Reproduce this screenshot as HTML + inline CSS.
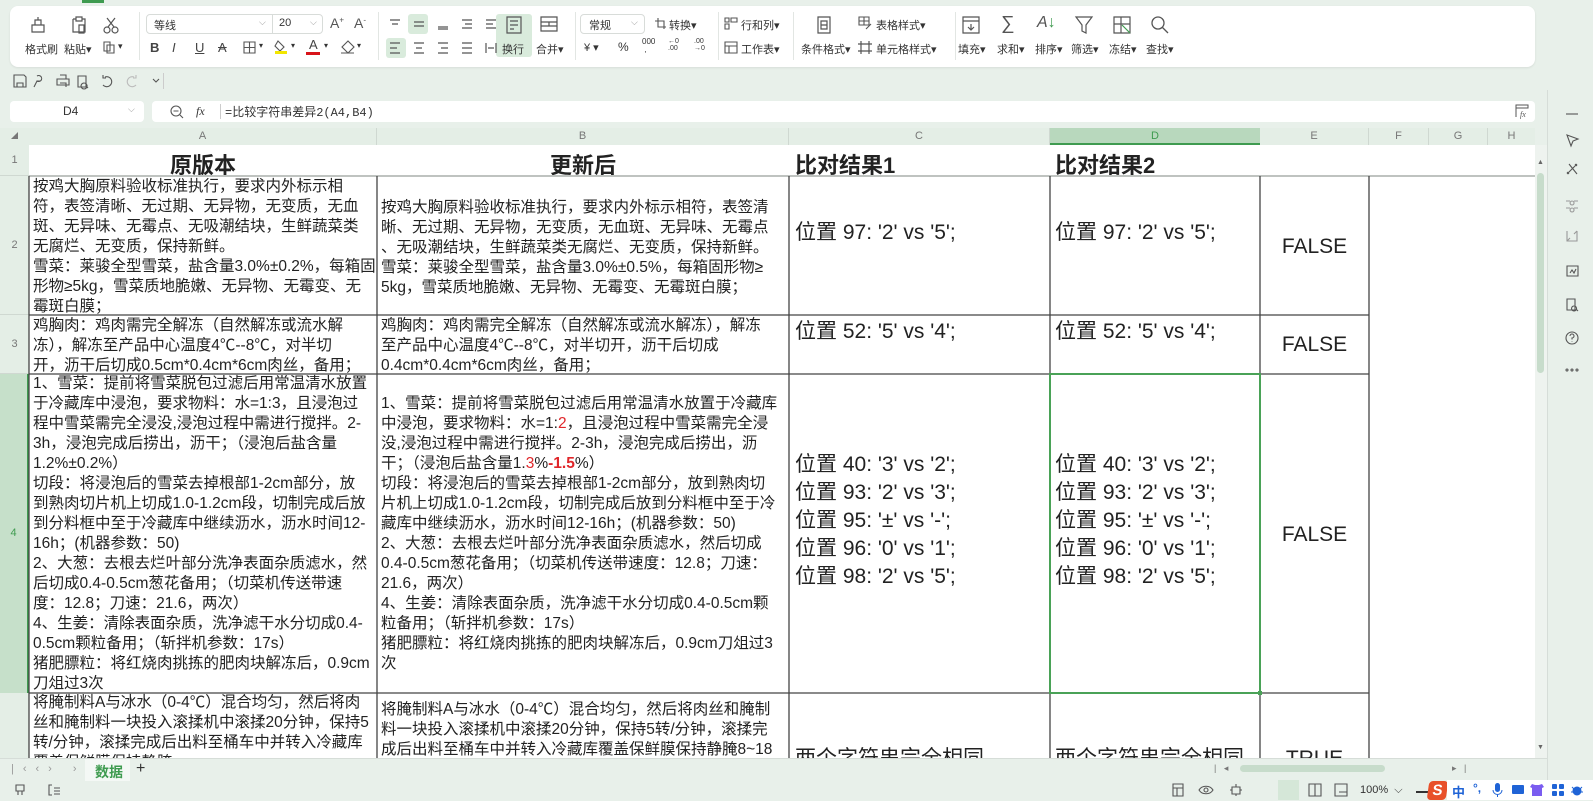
<!DOCTYPE html>
<html><head><meta charset="utf-8">
<style>
*{margin:0;padding:0;box-sizing:border-box}
body{width:1593px;height:800px;overflow:hidden;background:#e8f0ea;font-family:"Liberation Sans","Noto Sans CJK SC",sans-serif;color:#222;position:relative}
.abs{position:absolute}
.lbl{position:absolute;font-size:11px;color:#333;white-space:nowrap}
.ico{position:absolute}
.sep{position:absolute;top:12px;width:1px;height:48px;background:#e2e6e3}
.hdr{position:absolute;background:#e4eee6;color:#777;font-size:11px;text-align:center}
.r{color:#e0262a}
.cc{position:absolute;font-size:21px;line-height:28px;white-space:nowrap;color:#222}
.tA{position:absolute;left:33px;width:342px;overflow:hidden;font-size:15.5px;line-height:20px;white-space:nowrap}
.tB{position:absolute;left:381px;width:406px;overflow:hidden;font-size:15.5px;line-height:20px;white-space:nowrap}
svg{overflow:visible}
</style></head><body>

<div class="abs" style="left:82px;top:0;width:22px;height:3px;background:#3f9b50"></div>
<div class="abs" style="left:10px;top:6px;width:1525px;height:61px;background:#fff;border-radius:8px;box-shadow:0 1px 2px rgba(0,0,0,.08)"></div>

<svg class="ico" style="left:29px;top:16px" width="18" height="18" fill="none" stroke="#555" stroke-width="1.2"><path d="M3 9h12v7H3zM6 9V4h6v5M9 1v3"/></svg>
<div class="lbl" style="left:25px;top:41px">格式刷</div>
<svg class="ico" style="left:70px;top:16px" width="18" height="18" fill="none" stroke="#555" stroke-width="1.2"><path d="M3 3h3M12 3h3v13H3V3M6 1h6v4H6zM9 9h5v8H9z"/></svg>
<div class="lbl" style="left:64px;top:41px">粘贴▾</div>
<svg class="ico" style="left:102px;top:16px" width="18" height="18" fill="none" stroke="#555" stroke-width="1.2"><circle cx="5" cy="14" r="3"/><circle cx="13" cy="14" r="3"/><path d="M6 11L13 2M12 11L5 2"/></svg>
<svg class="ico" style="left:102px;top:40px" width="14" height="14" fill="none" stroke="#555" stroke-width="1.1"><path d="M2 2h6v9H2zM5 5h7v8H5z"/></svg>
<div class="lbl" style="left:118px;top:41px;font-size:9px">▾</div>
<div class="sep" style="left:139px"></div>

<div class="abs" style="left:146px;top:14px;width:177px;height:20px;border:1px solid #d8dcd9;border-radius:4px"></div>
<div class="abs" style="left:272px;top:14px;width:1px;height:20px;background:#d8dcd9"></div>
<div class="lbl" style="left:154px;top:17px">等线</div>
<div class="lbl" style="left:259px;top:17px;color:#999;font-size:9px">⌵</div>
<div class="lbl" style="left:279px;top:17px">20</div>
<div class="lbl" style="left:310px;top:17px;color:#999;font-size:9px">⌵</div>
<div class="lbl" style="left:330px;top:15px;font-size:14px;color:#555">A<sup style="font-size:8px">+</sup></div>
<div class="lbl" style="left:354px;top:15px;font-size:14px;color:#555">A<sup style="font-size:8px">-</sup></div>
<div class="lbl" style="left:150px;top:40px;font-size:13px;font-weight:bold;color:#444">B</div>
<div class="lbl" style="left:172px;top:40px;font-size:13px;font-style:italic;color:#444">I</div>
<div class="lbl" style="left:195px;top:40px;font-size:13px;text-decoration:underline;color:#444">U</div>
<div class="lbl" style="left:218px;top:40px;font-size:13px;text-decoration:line-through;color:#444">A</div>
<svg class="ico" style="left:243px;top:41px" width="13" height="13" fill="none" stroke="#555" stroke-width="1.1"><path d="M1 1h11v11H1zM6.5 1v11M1 6.5h11"/></svg>
<div class="lbl" style="left:259px;top:41px;font-size:8px">▾</div>
<svg class="ico" style="left:274px;top:39px" width="14" height="16" fill="none" stroke="#555" stroke-width="1.1"><path d="M4 2l6 6-4 4-5-5z"/><rect x="1" y="12" width="12" height="3" fill="#f2e600" stroke="none"/></svg>
<div class="lbl" style="left:291px;top:41px;font-size:8px">▾</div>
<div class="lbl" style="left:309px;top:37px;font-size:13px;color:#444">A</div>
<div class="abs" style="left:306px;top:52px;width:14px;height:3px;background:#d8141a"></div>
<div class="lbl" style="left:324px;top:41px;font-size:8px">▾</div>
<svg class="ico" style="left:340px;top:40px" width="15" height="14" fill="none" stroke="#555" stroke-width="1.1"><path d="M8 1l6 6-6 6-6-6zM1 13h13"/></svg>
<div class="lbl" style="left:357px;top:41px;font-size:8px">▾</div>
<div class="sep" style="left:378px"></div>

<div class="abs" style="left:408px;top:14px;width:20px;height:20px;background:#d9ebdc;border-radius:3px"></div>
<div class="abs" style="left:386px;top:38px;width:20px;height:20px;background:#d9ebdc;border-radius:3px"></div>
<div class="abs" style="left:496px;top:14px;width:36px;height:43px;background:#d9ebdc;border-radius:3px"></div>
<svg class="ico" style="left:389px;top:18px" width="120" height="12" fill="none" stroke="#555" stroke-width="1.2"><path d="M1 2h10M3 6h6M25 4h10M25 8h10M49 9h10M49 11h10M73 2h10M76 6h7M73 10h10M97 2h10M97 6h7M97 10h10"/></svg>
<svg class="ico" style="left:389px;top:42px" width="120" height="12" fill="none" stroke="#555" stroke-width="1.2"><path d="M1 1h10M1 6h7M1 11h10M25 1h10M27 6h6M25 11h10M49 1h10M52 6h7M49 11h10M73 1h10M73 6h10M73 11h10M97 1v10M107 1v10M99 6h6"/></svg>
<svg class="ico" style="left:505px;top:16px" width="18" height="18" fill="none" stroke="#555" stroke-width="1.2"><path d="M2 1h14v16H2zM5 5h8M5 9h8M5 13h4"/></svg>
<div class="lbl" style="left:502px;top:41px">换行</div>
<svg class="ico" style="left:540px;top:16px" width="18" height="16" fill="none" stroke="#555" stroke-width="1.2"><path d="M1 1h16v14H1zM1 6h16M1 10h16M9 6v4"/></svg>
<div class="lbl" style="left:536px;top:41px">合并▾</div>
<div class="sep" style="left:575px"></div>

<div class="abs" style="left:580px;top:14px;width:65px;height:20px;border:1px solid #d8dcd9;border-radius:4px"></div>
<div class="lbl" style="left:589px;top:17px">常规</div>
<div class="lbl" style="left:631px;top:17px;color:#999;font-size:9px">⌵</div>
<svg class="ico" style="left:654px;top:17px" width="13" height="13" fill="none" stroke="#555" stroke-width="1.1"><path d="M1 4h9v8M4 1v9h8"/></svg>
<div class="lbl" style="left:669px;top:17px">转换▾</div>
<div class="lbl" style="left:584px;top:41px">¥ ▾</div>
<div class="lbl" style="left:618px;top:40px;font-size:12px">%</div>
<div class="lbl" style="left:642px;top:38px;font-size:8px;line-height:8px">000<br>&nbsp;,</div>
<div class="lbl" style="left:668px;top:38px;font-size:7px;line-height:7px">←0<br>.00</div>
<div class="lbl" style="left:694px;top:38px;font-size:7px;line-height:7px">.00<br>→0</div>
<div class="sep" style="left:718px"></div>
<svg class="ico" style="left:724px;top:17px" width="14" height="13" fill="none" stroke="#555" stroke-width="1.1"><path d="M1 1h4v4H1zM1 7h4v5H1zM7 1h6v4H7z"/></svg>
<div class="lbl" style="left:741px;top:17px">行和列▾</div>
<svg class="ico" style="left:724px;top:41px" width="14" height="13" fill="none" stroke="#555" stroke-width="1.1"><path d="M1 1h12v11H1zM1 5h12M5 5v7"/></svg>
<div class="lbl" style="left:741px;top:41px">工作表▾</div>
<div class="sep" style="left:793px"></div>
<svg class="ico" style="left:815px;top:16px" width="18" height="18" fill="none" stroke="#555" stroke-width="1.2"><path d="M3 1h12v16H3zM6 5h6v8H6zM6 9h6"/></svg>
<div class="lbl" style="left:801px;top:41px">条件格式▾</div>
<svg class="ico" style="left:858px;top:16px" width="14" height="14" fill="none" stroke="#555" stroke-width="1.1"><path d="M1 1h10v8H1zM1 5h10M6 1v8M8 13l5-5"/></svg>
<div class="lbl" style="left:876px;top:17px">表格样式▾</div>
<svg class="ico" style="left:858px;top:41px" width="14" height="13" fill="none" stroke="#555" stroke-width="1.2"><path d="M3 0v13M11 0v13M0 3h14M0 10h14"/></svg>
<div class="lbl" style="left:876px;top:41px">单元格样式▾</div>
<div class="sep" style="left:955px"></div>

<svg class="ico" style="left:962px;top:16px" width="18" height="18" fill="none" stroke="#555" stroke-width="1.2"><path d="M1 1h16v16H1zM1 5h16M9 8v6M6 11l3 3 3-3"/></svg>
<div class="lbl" style="left:958px;top:41px">填充▾</div>
<div class="lbl" style="left:1001px;top:13px;font-size:19px;color:#555">∑</div>
<div class="lbl" style="left:997px;top:41px">求和▾</div>
<div class="lbl" style="left:1037px;top:14px;font-size:16px;color:#555;font-style:italic">A<span style="color:#3f9b50;font-style:normal">↓</span></div>
<div class="lbl" style="left:1035px;top:41px">排序▾</div>
<svg class="ico" style="left:1075px;top:16px" width="18" height="18" fill="none" stroke="#555" stroke-width="1.2"><path d="M1 1h16l-6 8v8l-4-2V9z"/></svg>
<div class="lbl" style="left:1071px;top:41px">筛选▾</div>
<svg class="ico" style="left:1113px;top:16px" width="18" height="18" fill="none" stroke="#555" stroke-width="1.2"><path d="M1 1h16v16H1zM1 8h16M8 1v16"/><path d="M9 9l8 8" stroke="#3f9b50"/></svg>
<div class="lbl" style="left:1109px;top:41px">冻结▾</div>
<svg class="ico" style="left:1151px;top:16px" width="18" height="18" fill="none" stroke="#555" stroke-width="1.3"><circle cx="7" cy="7" r="6"/><path d="M11.5 11.5L17 17"/></svg>
<div class="lbl" style="left:1146px;top:41px">查找▾</div>

<svg class="ico" style="left:13px;top:74px" width="150" height="14" fill="none" stroke="#555" stroke-width="1.1"><path d="M1 1h10l2 2v10H1zM4 9h6v4H4z"/><path d="M24 2a3 3 0 1 1 0 5l-3 6M24 7h3"/><path d="M44 5h12v6H44zM47 1h6v4M47 9h6v4"/><path d="M65 2h8v11h-8zM71 9a3 3 0 1 0 0.1 0M73 12l2 2"/><path d="M92 3a5 5 0 1 1-2 8M90 1v3h3"/><path d="M121 3a5 5 0 1 0 2 8M123 1v3h-3" stroke="#bbb"/><path d="M140 5l3 3 3-3"/></svg>
<div class="abs" style="left:163px;top:73px;width:1px;height:16px;background:#ccc"></div>

<div class="abs" style="left:10px;top:101px;width:134px;height:21px;background:#fff;border-radius:4px"></div>
<div class="lbl" style="left:63px;top:104px;font-size:12px">D4</div>
<div class="lbl" style="left:128px;top:104px;font-size:9px;color:#999">⌵</div>
<div class="abs" style="left:152px;top:101px;width:1383px;height:21px;background:#fff;border-radius:4px"></div>
<svg class="ico" style="left:170px;top:105px" width="14" height="14" fill="none" stroke="#555" stroke-width="1.1"><circle cx="6" cy="6" r="5"/><path d="M3.5 6h5M10 10l3 3"/></svg>
<div class="lbl" style="left:196px;top:104px;font-size:12px;font-style:italic;font-family:'Liberation Serif',serif">fx</div>
<div class="abs" style="left:220px;top:104px;width:1px;height:15px;background:#ccc"></div>
<div class="lbl" style="left:225px;top:103px;font-size:12px;font-family:'Liberation Mono','Noto Sans CJK SC',monospace">=比较字符串差异2(A4,B4)</div>
<svg class="ico" style="left:1515px;top:104px" width="14" height="14" fill="none" stroke="#555" stroke-width="1"><path d="M1 13V1h12v3H1"/><text x="5" y="13" font-size="8" font-style="italic" fill="#555" stroke="none" font-family="Liberation Serif">fx</text></svg>

<div class="abs" style="left:0;top:128px;width:1535px;height:630px;background:#fff"></div>
<div class="hdr" style="left:0;top:128px;width:29px;height:17px"><span style="font-size:7px;position:absolute;left:11px;top:3px">◢</span></div>
<div class="hdr" style="left:29px;top:128px;width:348px;height:17px;line-height:17px;border-right:1px solid #cfd8d1">A</div>
<div class="hdr" style="left:377px;top:128px;width:412px;height:17px;line-height:17px;border-right:1px solid #cfd8d1">B</div>
<div class="hdr" style="left:789px;top:128px;width:261px;height:17px;line-height:17px;border-right:1px solid #cfd8d1">C</div>
<div class="hdr" style="left:1050px;top:128px;width:210px;height:17px;line-height:16px;background:#b8d8bd;color:#3f9b50;border-bottom:2px solid #3f9b50">D</div>
<div class="hdr" style="left:1260px;top:128px;width:109px;height:17px;line-height:17px;border-right:1px solid #cfd8d1">E</div>
<div class="hdr" style="left:1369px;top:128px;width:60px;height:17px;line-height:17px;border-right:1px solid #cfd8d1">F</div>
<div class="hdr" style="left:1429px;top:128px;width:59px;height:17px;line-height:17px;border-right:1px solid #cfd8d1">G</div>
<div class="hdr" style="left:1488px;top:128px;width:47px;height:17px;line-height:17px">H</div>
<div class="hdr" style="left:0;top:145px;width:29px;height:31px;line-height:31px;border-bottom:1px solid #cfd8d1">1</div>
<div class="hdr" style="left:0;top:176px;width:29px;height:139px;line-height:139px;border-bottom:1px solid #cfd8d1">2</div>
<div class="hdr" style="left:0;top:315px;width:29px;height:59px;line-height:59px;border-bottom:1px solid #cfd8d1">3</div>
<div class="hdr" style="left:0;top:374px;width:29px;height:319px;line-height:319px;background:#c6e0ca;color:#3f9b50;border-right:2px solid #3f9b50">4</div>
<div class="hdr" style="left:0;top:693px;width:29px;height:65px"></div>

<div class="abs" style="left:29px;top:148px;width:348px;text-align:center;font-size:22px;font-weight:bold">原版本</div>
<div class="abs" style="left:377px;top:148px;width:412px;text-align:center;font-size:22px;font-weight:bold">更新后</div>
<div class="abs" style="left:795px;top:148px;font-size:22px;font-weight:bold">比对结果1</div>
<div class="abs" style="left:1055px;top:148px;font-size:22px;font-weight:bold">比对结果2</div>
<div class="abs" style="left:29px;top:175px;width:1506px;height:2px;background:#bfc3c0"></div>

<svg class="abs" style="left:0;top:0" width="1593" height="800">
<g stroke="#444" stroke-width="1.3" fill="none">
<path d="M29 176V758M377 176V758M789 176V758M1050 176V758M1260 176V758M1369 176V758"/>
<path d="M29 315H1369M29 374H1369M29 693H1369"/>
</g>
<rect x="1050" y="374" width="210" height="319" fill="none" stroke="#4aa257" stroke-width="2"/>
<rect x="1258" y="691" width="4" height="4" fill="#4aa257"/>
</svg>

<div class="tA" style="top:177px">按鸡大胸原料验收标准执行，要求内外标示相<br>符，表签清晰、无过期、无异物，无变质，无血<br>斑、无异味、无霉点、无吸潮结块，生鲜蔬菜类<br>无腐烂、无变质，保持新鲜。<br>雪菜：莱骏全型雪菜，盐含量3.0%±0.2%，每箱固<br>形物≥5kg，雪菜质地脆嫩、无异物、无霉变、无<br>霉斑白膜；</div>
<div class="tB" style="top:198px">按鸡大胸原料验收标准执行，要求内外标示相符，表签清<br>晰、无过期、无异物，无变质，无血斑、无异味、无霉点<br>、无吸潮结块，生鲜蔬菜类无腐烂、无变质，保持新鲜。<br>雪菜：莱骏全型雪菜，盐含量3.0%±0.5%，每箱固形物≥<br>5kg，雪菜质地脆嫩、无异物、无霉变、无霉斑白膜；</div>
<div class="cc" style="left:795px;top:219px">位置 97: '2' vs '5';</div>
<div class="cc" style="left:1055px;top:219px">位置 97: '2' vs '5';</div>
<div class="cc" style="left:1260px;width:109px;text-align:center;top:233px">FALSE</div>

<div class="tA" style="top:316px">鸡胸肉：鸡肉需完全解冻（自然解冻或流水解<br>冻），解冻至产品中心温度4℃--8℃，对半切<br>开，沥干后切成0.5cm*0.4cm*6cm肉丝，备用；</div>
<div class="tB" style="top:316px">鸡胸肉：鸡肉需完全解冻（自然解冻或流水解冻），解冻<br>至产品中心温度4℃--8℃，对半切开，沥干后切成<br>0.4cm*0.4cm*6cm肉丝，备用；</div>
<div class="cc" style="left:795px;top:318px">位置 52: '5' vs '4';</div>
<div class="cc" style="left:1055px;top:318px">位置 52: '5' vs '4';</div>
<div class="cc" style="left:1260px;width:109px;text-align:center;top:331px">FALSE</div>

<div class="tA" style="top:374px">1、雪菜：提前将雪菜脱包过滤后用常温清水放置<br>于冷藏库中浸泡，要求物料：水=1:3，且浸泡过<br>程中雪菜需完全浸没,浸泡过程中需进行搅拌。2-<br>3h，浸泡完成后捞出，沥干；（浸泡后盐含量<br>1.2%±0.2%）<br>切段：将浸泡后的雪菜去掉根部1-2cm部分，放<br>到熟肉切片机上切成1.0-1.2cm段，切制完成后放<br>到分料框中至于冷藏库中继续沥水，沥水时间12-<br>16h；(机器参数：50)<br>2、大葱：去根去烂叶部分洗净表面杂质滤水，然<br>后切成0.4-0.5cm葱花备用；（切菜机传送带速<br>度：12.8；刀速：21.6，两次）<br>4、生姜：清除表面杂质，洗净滤干水分切成0.4-<br>0.5cm颗粒备用；（斩拌机参数：17s）<br>猪肥膘粒：将红烧肉挑拣的肥肉块解冻后，0.9cm<br>刀俎过3次</div>
<div class="tB" style="top:394px">1、雪菜：提前将雪菜脱包过滤后用常温清水放置于冷藏库<br>中浸泡，要求物料：水=1:<span class="r">2</span>，且浸泡过程中雪菜需完全浸<br>没,浸泡过程中需进行搅拌。2-3h，浸泡完成后捞出，沥<br>干；（浸泡后盐含量1.<span class="r">3</span>%<b class="r">-1.5</b>%）<br>切段：将浸泡后的雪菜去掉根部1-2cm部分，放到熟肉切<br>片机上切成1.0-1.2cm段，切制完成后放到分料框中至于冷<br>藏库中继续沥水，沥水时间12-16h；(机器参数：50)<br>2、大葱：去根去烂叶部分洗净表面杂质滤水，然后切成<br>0.4-0.5cm葱花备用；（切菜机传送带速度：12.8；刀速：<br>21.6，两次）<br>4、生姜：清除表面杂质，洗净滤干水分切成0.4-0.5cm颗<br>粒备用；（斩拌机参数：17s）<br>猪肥膘粒：将红烧肉挑拣的肥肉块解冻后，0.9cm刀俎过3<br>次</div>
<div class="cc" style="left:795px;top:451px">位置 40: '3' vs '2';<br>位置 93: '2' vs '3';<br>位置 95: '±' vs '-';<br>位置 96: '0' vs '1';<br>位置 98: '2' vs '5';</div>
<div class="cc" style="left:1055px;top:451px">位置 40: '3' vs '2';<br>位置 93: '2' vs '3';<br>位置 95: '±' vs '-';<br>位置 96: '0' vs '1';<br>位置 98: '2' vs '5';</div>
<div class="cc" style="left:1260px;width:109px;text-align:center;top:521px">FALSE</div>

<div class="abs" style="left:0;top:693px;width:1535px;height:65px;overflow:hidden">
<div class="tA" style="top:0">将腌制料A与冰水（0-4℃）混合均匀，然后将肉<br>丝和腌制料一块投入滚揉机中滚揉20分钟，保持5<br>转/分钟，滚揉完成后出料至桶车中并转入冷藏库<br>覆盖保鲜膜保持静腌</div>
<div class="tB" style="top:7px">将腌制料A与冰水（0-4℃）混合均匀，然后将肉丝和腌制<br>料一块投入滚揉机中滚揉20分钟，保持5转/分钟，滚揉完<br>成后出料至桶车中并转入冷藏库覆盖保鲜膜保持静腌8~18</div>
<div class="cc" style="left:795px;top:52px">两个字符串完全相同</div>
<div class="cc" style="left:1055px;top:52px">两个字符串完全相同</div>
<div class="cc" style="left:1260px;width:109px;text-align:center;top:52px">TRUE</div>
</div>

<div class="abs" style="left:1535px;top:145px;width:12px;height:613px;background:#eef3ef"></div>
<div class="abs" style="left:1537px;top:173px;width:7px;height:200px;background:#c7dccb;border-radius:4px"></div>
<div class="lbl" style="left:1537px;top:159px;font-size:7px;color:#666">▲</div>
<div class="lbl" style="left:1537px;top:744px;font-size:7px;color:#666">▼</div>
<div class="abs" style="left:1547px;top:90px;width:1px;height:692px;background:#d6ddd8"></div>

<svg class="ico" style="left:1564px;top:108px" width="18" height="280" fill="none" stroke="#555" stroke-width="1.1">
<path d="M2 6h12"/>
<path d="M3 27l11 4-5 2-2 5z"/>
<path d="M3 66l10-10M5 56l8 10M11 56l2 2M3 64l2 2"/>
<path d="M2 93h4M10 93h4M2 100h4M10 100h4M8 93a2 2 0 1 0 .1 0M8 100a2 2 0 1 0 .1 0" stroke="#999"/>
<path d="M3 123v10h10v-10M3 133l3-3M13 123l-3 3" stroke="#999"/>
<path d="M3 158h11v10H3zM6 165l2-3 2 3 2-4"/>
<path d="M3 191h8v11H3zM10 198a2.5 2.5 0 1 0 .1 0M12 201l2 2"/>
<circle cx="8" cy="230" r="6"/><path d="M6 228a2 2 0 1 1 2 2v1.5M8 233.5v.5"/>
<circle cx="3" cy="262" r="1"/><circle cx="8" cy="262" r="1"/><circle cx="13" cy="262" r="1"/>
</svg>

<div class="abs" style="left:0;top:758px;width:1547px;height:24px;background:#e8f0ea;border-top:1px solid #d6ddd8"></div>
<div class="lbl" style="left:11px;top:763px;font-size:11px;color:#999;letter-spacing:9px">|‹‹›&nbsp;›|</div>
<div class="abs" style="left:85px;top:759px;width:45px;height:22px;background:#f4f8f5"></div>
<div class="lbl" style="left:95px;top:762px;font-size:14px;color:#3f9b50;font-weight:bold">数据</div>
<div class="lbl" style="left:136px;top:760px;font-size:16px;color:#333">+</div>
<div class="lbl" style="left:1214px;top:763px;font-size:9px;color:#777">|&nbsp;&nbsp;&nbsp;◂</div>
<div class="abs" style="left:1240px;top:765px;width:145px;height:7px;background:#c7dccb;border-radius:4px"></div>
<div class="lbl" style="left:1452px;top:763px;font-size:9px;color:#777">▸&nbsp;&nbsp;&nbsp;|</div>

<svg class="ico" style="left:14px;top:783px" width="50" height="14" fill="none" stroke="#555" stroke-width="1.1"><path d="M2 2h8v6H2zM4 8v4M8 8v4"/><path d="M38 2h-3v10h3M40 5h6M40 8h6M40 11h6"/></svg>
<svg class="ico" style="left:1172px;top:783px" width="200" height="14" fill="none" stroke="#555" stroke-width="1.1">
<path d="M1 1h10v12H1zM1 5h10M5 5v8"/>
<path d="M27 7c3-5 11-5 14 0c-3 5-11 5-14 0z"/><circle cx="34" cy="7" r="2"/>
<path d="M60 4h8v7h-8zM64 1v3M64 11v2M58 7h2M68 7h2"/>
<path d="M111 1h12v12H111zM111 5h12M115 5v8"/>
<path d="M137 1h12v12H137zM143 1v12"/>
<path d="M163 1h12v12H163zM167 9h8"/>
</svg>
<div class="abs" style="left:1278px;top:780px;width:21px;height:20px;background:#d5e7d8"></div>
<div class="lbl" style="left:1360px;top:784px;font-size:11px">100%&nbsp;&nbsp;⌵</div>
<div class="abs" style="left:1416px;top:791px;width:14px;height:2px;background:#333"></div>
<div class="abs" style="left:1428px;top:781px;width:19px;height:19px;background:#e8502a;border-radius:4px;transform:skewX(-8deg);color:#fff;font-weight:bold;font-size:15px;line-height:19px;text-align:center">S</div>
<div class="abs" style="left:1447px;top:780px;width:146px;height:20px;background:#fff"></div>
<div class="lbl" style="left:1452px;top:782px;font-size:13px;color:#1f63d6;font-weight:bold">中</div>
<div class="lbl" style="left:1473px;top:781px;font-size:12px;color:#1f63d6;font-weight:bold">°,</div>
<svg class="ico" style="left:1492px;top:783px" width="100" height="15" fill="#1f63d6"><rect x="3" y="0" width="5" height="9" rx="2.5"/><path d="M1 7a4.5 4.5 0 0 0 9 0M5.5 11v3" stroke="#1f63d6" fill="none"/><rect x="20" y="2" width="12" height="9" rx="1"/><path d="M40 1l3 1h4l3-1 2 3-2 1v8h-10V5l-2-1z" fill="#7a5cf0"/><rect x="60" y="1" width="5" height="5" rx="1"/><rect x="67" y="1" width="5" height="5" rx="1"/><rect x="60" y="8" width="5" height="5" rx="1"/><rect x="67" y="8" width="5" height="5" rx="1"/><circle cx="85" cy="8" r="4.5"/><path d="M80 4l2 2M90 4l-2 2M79 9h2M89 9h2" stroke="#1f63d6"/></svg>
</body></html>
